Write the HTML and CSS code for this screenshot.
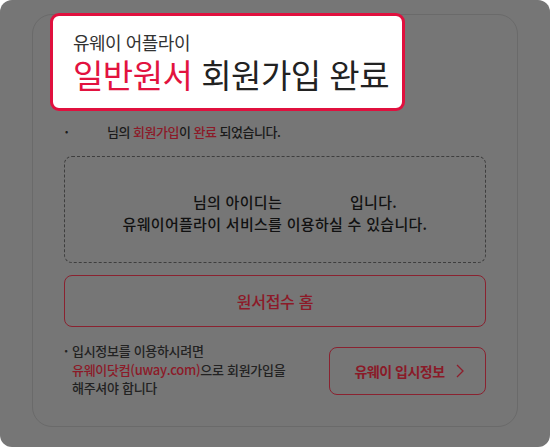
FILE: index.html
```html
<!DOCTYPE html>
<html lang="ko">
<head>
<meta charset="utf-8">
<link rel="stylesheet" href="styles.css">
</head>
<body>
<div class="frame">
  <div class="card">
    <p class="done"><span class="dot">•</span><span class="name"></span>님의 <em>회원가입</em>이 <em>완료</em> 되었습니다.</p>
    <div class="idbox">
      <p><span class="uname"></span>님의 아이디는<span class="uid"></span>입니다.</p>
      <p>유웨이어플라이 서비스를 이용하실 수 있습니다.</p>
    </div>
    <a class="home-btn">원서접수 홈</a>
    <div class="bottom">
      <div class="note">
        <span class="ndot">·</span>
        <p>입시정보를 이용하시려면<br><em>유웨이닷컴(uway.com)</em>으로 회원가입을<br>해주셔야 합니다</p>
      </div>
      <a class="info-btn">유웨이 입시정보
        <svg width="10" height="16" viewBox="0 0 10 16"><polyline points="2,2 8,8 2,14" fill="none" stroke="#8e1e2c" stroke-width="1.3"/></svg>
      </a>
    </div>
  </div>
  <div class="callout">
    <div class="c-sub">유웨이 어플라이</div>
    <div class="c-title"><span class="red">일반원서</span> 회원가입 완료</div>
  </div>
</div>
</body>
</html>
```
FILE: styles.css
```css
* { box-sizing: border-box; }
html, body { margin: 0; padding: 0; background: #ffffff; }
body { font-family: "Noto Sans CJK KR", "Noto Sans", sans-serif; }
em { font-style: normal; color: #8c1a28; }
p { margin: 0; }

.frame {
  position: relative;
  width: 550px;
  height: 447px;
  background: #767676;
  border-radius: 12px;
  padding: 14px 32px 20px 32px;
}

.card {
  height: 413px;
  border: 1px solid #6a6a6a;
  border-radius: 20px;
  padding: 108px 31px 0 31px;
}

.done {
  display: flex;
  align-items: center;
  height: 16px;
  font-size: 13px;
  font-weight: 500;
  letter-spacing: -0.5px;
  color: #1a1a1a;
  white-space: pre;
}
.done .dot { font-size: 9px; width: 0; margin-left: 1px; }
.done .name { display: inline-block; width: 42px; }

.idbox {
  margin-top: 17px;
  height: 107px;
  border: 1px dashed #3e3e3e;
  border-radius: 8px;
  display: flex;
  flex-direction: column;
  justify-content: center;
  align-items: center;
  font-size: 15px;
  font-weight: 500;
  line-height: 22px;
  letter-spacing: 0.3px;
  color: #111111;
  padding-top: 6px;
}
.idbox .uname { display: inline-block; width: 40px; }
.idbox .uid { display: inline-block; width: 68px; }

.home-btn {
  margin-top: 12px;
  height: 52px;
  border: 1px solid #8a2230;
  border-radius: 8px;
  display: flex;
  align-items: center;
  justify-content: center;
  font-size: 16px;
  font-weight: 500;
  color: #8c1a28;
  letter-spacing: -0.3px;
}

.bottom {
  margin-top: 17px;
  display: flex;
  justify-content: space-between;
  align-items: center;
}

.note {
  display: flex;
  font-size: 13px;
  font-weight: 500;
  line-height: 18.5px;
  letter-spacing: -0.3px;
  color: #222222;
  margin-top: -2px;
}
.note .ndot { width: 8px; font-weight: bold; }

.info-btn {
  width: 157px;
  height: 48px;
  border: 1px solid #8a2230;
  border-radius: 8px;
  display: flex;
  align-items: center;
  justify-content: center;
  gap: 10px;
  font-size: 14px;
  font-weight: bold;
  color: #8a1a28;
  letter-spacing: -0.5px;
  padding-left: 4px;
}

.callout {
  position: absolute;
  left: 50px;
  top: 13px;
  width: 355px;
  height: 98px;
  background: #ffffff;
  border: 3px solid #e0103e;
  border-radius: 9px;
  padding: 15px 0 0 20px;
  color: #222222;
}
.c-sub {
  font-size: 18px;
  line-height: 22px;
  letter-spacing: -0.5px;
  color: #333333;
}
.c-title {
  margin-top: 6px;
  font-size: 33px;
  line-height: 30px;
  letter-spacing: -0.5px;
}
.c-title .red { color: #e2133f; }
```
